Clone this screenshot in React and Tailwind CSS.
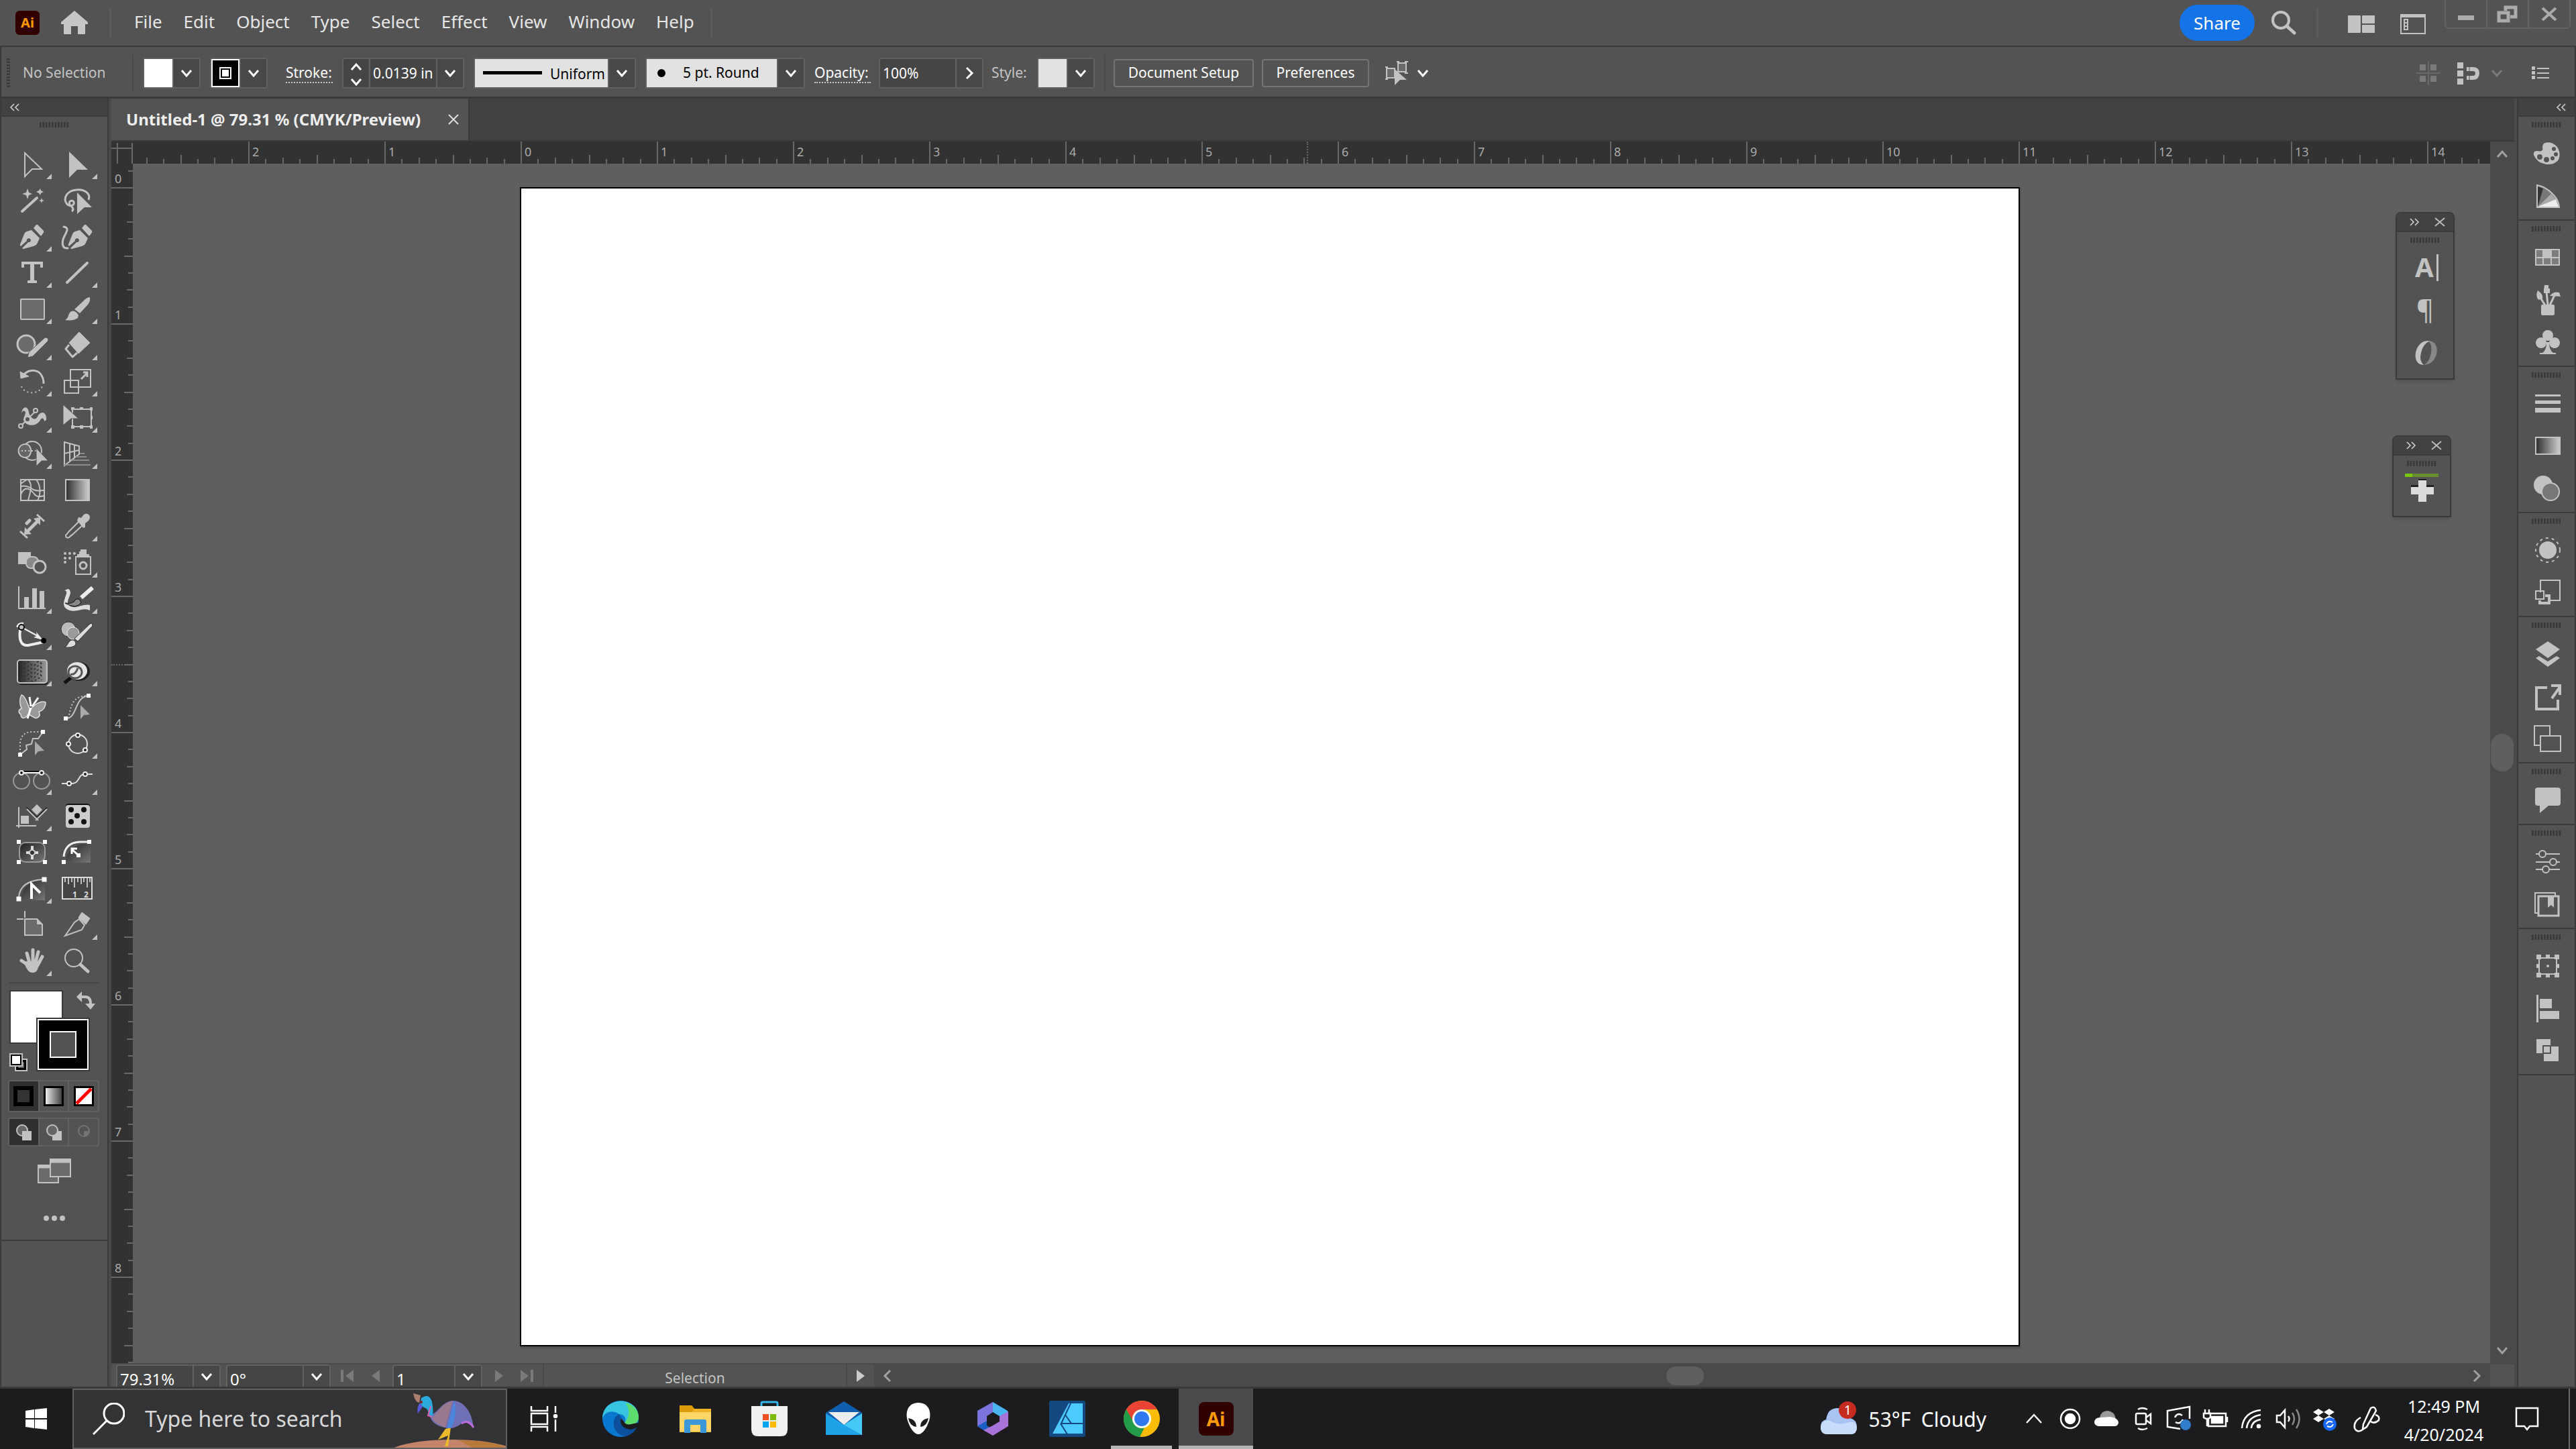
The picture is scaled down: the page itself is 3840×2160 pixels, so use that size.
import { useState } from 'react'

const menus = ['File', 'Edit', 'Object', 'Type', 'Select', 'Effect', 'View', 'Window', 'Help']

// ── small shared pieces ──

const chevrons = {
  down: 'M-7 -4 L0 4 L7 -4',
  up: 'M-7 4 L0 -4 L7 4',
  left: 'M4 -8 L-4 0 L4 8',
  right: 'M-4 -8 L4 0 L-4 8',
}

function Chevron({ dir = 'down', width = 3 }) {
  return (
    <svg className="w-6 h-6 shrink-0 pointer-events-none" viewBox="-12 -12 24 24" aria-hidden="true">
      <path d={chevrons[dir]} fill="none" stroke="currentColor" strokeWidth={width} />
    </svg>
  )
}

function DoubleChevron({ dir = 'left' }) {
  return (
    <svg className="w-4 h-3" viewBox="0 0 16 12" fill="none" stroke="#d0d0d0" strokeWidth="1.6" aria-hidden="true">
      <path d={dir === 'left' ? 'M7 1 L2 6 L7 11 M14 1 L9 6 L14 11' : 'M2 1 L7 6 L2 11 M9 1 L14 6 L9 11'} />
    </svg>
  )
}

function Grip() {
  return (
    <svg className="w-11 h-2 mx-auto" viewBox="0 0 44 8" aria-hidden="true">
      <path d="M0 4 H44" stroke="#393939" strokeWidth="8" strokeDasharray="2.6 1.9" />
    </svg>
  )
}

function AiLogo({ className }) {
  return (
    <span className={`flex items-center justify-center bg-[#300000] text-[#ff9a00] font-bold ${className}`}>Ai</span>
  )
}

function ArrowButton({ label, dir = 'down' }) {
  return (
    <button aria-label={label} className="w-10 h-full shrink-0 flex items-center justify-center bg-[#484848] border-l-2 border-[#616161] text-white">
      <Chevron dir={dir} />
    </button>
  )
}

const boxClass = 'h-[46px] shrink-0 flex items-center border-2 border-[#616161] rounded-sm bg-[#454545]'

// ── tool icons, drawn around the centre of a 68 × 54 cell ──

const C = '#c2c2c2'
const line = { fill: 'none', stroke: C, strokeWidth: 2 }
const bg = '#535353'

const Node = ({ x, y, s = 6 }) => <rect x={x - s / 2} y={y - s / 2} width={s} height={s} fill="#fff" />
const Ring = ({ x, y }) => <circle cx={x} cy={y} r="3" fill="#222" stroke="#eee" strokeWidth="2" />

const PenBody = () => (
  <g fill={C}>
    <path d="M6 -18 Q8 -19 9 -17 L17 -9 Q18 -7 16 -5 L13 -1 L2 -13 Z" />
    <path d="M-1 -10 L11 2 L7 11 Q5 13 2 14 L-13 18 Q-15 18 -15 17 L-6 8 A3 3 0 1 0 -8 6 L-17 14 Q-19 13 -18 11 L-12 -4 Q-11 -7 -8 -8 Z" />
  </g>
)

const tools = [
  ['Selection', true, <path d="M-11 -17 L14 7 H0 L-11 18 Z" {...line} />],
  ['Direct selection', true, <path d="M-13 -19 L15 8 H-1 L-13 20 Z" fill={C} />],
  ['Magic wand', false, <g fill={C}>
    <path d="M-15 16 L7 -4" stroke={C} strokeWidth="4" strokeLinecap="round" />
    <path d="M-7 -18 L-5 -12 L0 -10 L-5 -8 L-7 -2 L-9 -8 L-15 -10 L-9 -12 Z M12 -18 L13 -15 L17 -13 L13 -11 L12 -8 L10 -11 L6 -13 L10 -15 Z M14 -4 L15 -1 L18 0 L15 1 L14 4 L13 1 L10 0 L13 -1 Z" />
  </g>],
  ['Lasso', false, <g>
    <path d="M16 -1 C20 -12 8 -17 -2 -16 C-16 -15 -22 -4 -17 4 C-13 10 -4 8 -6 2 C-8 -2 -15 1 -12 6 C-10 9 -4 12 -9 16" {...line} strokeWidth="3" />
    <path d="M-1 -12 L21 10 H10 L-1 20 Z" fill={C} />
  </g>],
  ['Pen', true, <PenBody />],
  ['Curvature', false, <g>
    <g transform="translate(4 0)"><PenBody /></g>
    <path d="M-21 -15 C-10 -13 -20 -4 -22 4 C-24 12 -22 18 -15 17" {...line} strokeWidth="3" strokeLinecap="round" />
  </g>],
  ['Type', true, <g fill={C}>
    <rect x="-16" y="-17" width="32" height="4" rx="1" /><rect x="-16" y="-17" width="4" height="9" rx="1" /><rect x="12" y="-17" width="4" height="9" rx="1" />
    <rect x="-3" y="-17" width="6" height="30" /><rect x="-7" y="11" width="14" height="4" rx="1" />
  </g>],
  ['Line segment', true, <path d="M-16 14 L14 -15" stroke={C} strokeWidth="4" strokeLinecap="round" />],
  ['Rectangle', true, <rect x="-17" y="-15" width="35" height="30" rx="1" {...line} fill="#6b6b6b" />],
  ['Paintbrush', true, <g fill={C}>
    <path d="M18 -18 Q19 -12 15 -7 L3 6 L-5 0 L8 -12 Q13 -18 18 -18 Z" />
    <path d="M-19 16 Q-15 14 -14 9 Q-11 1 -5 3 Q3 7 0 13 Q-7 18 -19 16 Z" />
  </g>],
  ['Shaper', true, <g>
    <circle cx="-9" cy="-2" r="13" {...line} fill="#6b6b6b" strokeWidth="3" />
    <path d="M-7 18 L-5 10 L18 -11 Q20 -13 23 -11 Q25 -9 23 -6 L1 16 Z" fill={C} stroke={bg} />
  </g>],
  ['Eraser', true, <g>
    <path d="M2 -20 L18 -4 L1 12 L-13 -4 Z" fill={C} stroke={C} strokeLinejoin="round" />
    <path d="M-13 -1 L-18 5 L-8 17 L-1 11" {...line} strokeWidth="3" strokeLinejoin="round" />
  </g>],
  ['Rotate', true, <g>
    <path d="M-13 -10 C-4 -20 10 -18 14 -9 Q17 -5 17 3" {...line} strokeWidth="3" />
    <path d="M-18 -15 L-17 -5 L-5 -8 Z" fill={C} stroke={C} />
    <path d="M-16 7 C-12 19 10 20 15 7" {...line} strokeDasharray="2 4" />
  </g>],
  ['Scale', true, <g {...line}>
    <rect x="-11" y="-18" width="30" height="26" /><rect x="-20" y="-2" width="21" height="19" />
    <path d="M5 -4 L14 -13 M8 -14 H14 V-7" strokeWidth="3" />
  </g>],
  ['Width', true, <g>
    <path d="M-16 -7 C-14 -19 -6 -18 -5 -8 C-2 2 5 4 8 -2 C12 -11 22 -10 21 3 L18 5 C17 -2 13 0 11 5 C4 14 -10 12 -13 3 C-13 -2 -8 -7 -11 -10 Q-14 -12 -16 -7 Z" fill={C} />
    <path d="M-17 12 L6 -11" stroke={C} strokeWidth="2" />
    <g {...line} fill={bg}><circle cx="-17" cy="12" r="3" /><circle cx="5" cy="-11" r="3" /><circle cx="-7" cy="2" r="4" /></g>
  </g>],
  ['Free transform', true, <g>
    <rect x="-8" y="-13" width="28" height="26" {...line} />
    <path d="M-10 11 h5 v5 h-5 Z M3 11 h5 v5 h-5 Z M18 11 h4 v5 h-4 Z M18 -16 h4 v5 h-4 Z M3 -16 h5 v4 h-5 Z M-10 -16 h5 v4 h-5 Z M19 -3 h3 v5 h-3 Z" fill={C} />
    <path d="M-22 -20 L1 1 H-10 L-22 11 Z" fill={C} stroke={bg} />
  </g>],
  ['Shape builder', true, <g>
    <circle cx="0" cy="-5" r="14" {...line} />
    <path d="M-6 -14 A10 10 0 1 0 -6 4 A12 12 0 0 0 -6 -14" {...line} fill="#666" />
    <path d="M-16 -5 H6" {...line} strokeDasharray="2 3" />
    <path d="M6 -9 L24 10 H14 L6 18 Z" fill={C} stroke={bg} />
  </g>],
  ['Perspective grid', true, <g {...line}>
    <path d="M-20 -18 L2 -12 V0 L-20 17 Z M-12 -16 V10 M-5 -14 V5 M-20 -1 L2 -6" />
    <path d="M3 -1 H10 M-3 4 H13 M-9 9 H17 M-20 16 H19" stroke="#8c8c8c" />
  </g>],
  ['Mesh', false, <g {...line}>
    <rect x="-17" y="-16" width="35" height="31" />
    <path d="M-17 -6 C-8 -8 -2 -4 2 -1 C8 2 12 0 18 0 M-17 6 C-12 -6 -4 -4 2 4 C6 10 10 10 18 8 M-6 -16 C2 -8 -4 6 -6 15 M6 -16 C14 -6 12 8 8 15 M-17 -10 L-8 -16" />
  </g>],
  ['Gradient', false, <rect x="-18" y="-16" width="35" height="31" {...line} fill="url(#gradDark)" />],
  ['Measure', false, <g>
    <path d="M-18 7 L-7 17 M7 -18 L18 -8" {...line} strokeWidth="3" />
    <path d="M-8 8 L8 -8" {...line} strokeWidth="5" />
    <path d="M-12 12 L-11 1 L-1 11 Z M12 -14 L12 -2 L2 -12 Z" fill={C} />
    <path d="M-8 -5 L-4 -9" {...line} strokeWidth="5" strokeLinecap="round" />
  </g>],
  ['Eyedropper', true, <g>
    <path d="M2 -8 L-14 8 Q-16 11 -18 13 Q-18 18 -13 16 Q-10 13 -8 12 L8 -3" {...line} />
    <path d="M1 -14 L5 -13 L9 -18 Q14 -21 17 -17 Q20 -13 15 -8 L11 -5 L11 1 L8 2 L-1 -9 Z" fill={C} />
  </g>],
  ['Blend', false, <g>
    <rect x="-21" y="-16" width="19" height="18" fill={C} />
    <rect x="-9" y="-9" width="18" height="17" rx="7" fill="#888" stroke={C} strokeWidth="2" />
    <circle cx="11" cy="6" r="9" {...line} fill={bg} strokeWidth="3" />
  </g>],
  ['Symbol sprayer', true, <g>
    <path d="M-19 -14 H-4 M-19 -7 H-10 M-19 -1 H-18" stroke={C} strokeWidth="4" strokeLinecap="round" strokeDasharray="0.1 6.8" />
    <rect x="-3" y="-9" width="22" height="26" {...line} /><path d="M2 -15 H13 M-1 -11 H17 M4 -18 H13" stroke={C} strokeWidth="4" />
    <circle cx="8" cy="4" r="5" {...line} strokeWidth="3" />
  </g>],
  ['Column graph', true, <g fill={C}>
    <path d="M-20 -19 V14 H20" {...line} />
    <rect x="-12" y="-3" width="7" height="16" /><rect x="0" y="-16" width="7" height="29" /><rect x="11" y="-12" width="7" height="25" />
  </g>],
  ['Art brush', true, <g>
    <path d="M-20 -12 Q-12 -19 -11 -9 C-12 -2 -17 2 -14 8 C-6 18 6 6 18 9 V17 C8 12 0 20 -12 17 C-26 12 -20 2 -17 -8 Q-16 -13 -20 -12 Z" fill="#ddd" />
    <path d="M-19 6 Q-6 8 -3 0 L2 0 L5 5 Q-2 16 -19 6 Z" fill="#888" stroke="#111" />
    <path d="M5 -2 L22 -17" stroke="#eee" strokeWidth="6" />
  </g>],
  ['Vector path', true, <g>
    <path d="M-22 -12 Q-20 -18 -13 -17 M-18 -8 C-20 8 -16 16 -6 15 L17 10" {...line} stroke="#eee" strokeWidth="4" />
    <path d="M-12 -10 L8 1" stroke="#eee" strokeWidth="2" /><path d="M6 -5 L16 7 L2 3 L7 1 Z" fill="#eee" />
    <circle cx="-16" cy="-12" r="4" fill={C} stroke="#111" strokeWidth="2" /><circle cx="17" cy="8" r="4" fill="#000" />
  </g>],
  ['Color brush', false, <g>
    <circle cx="-14" cy="-9" r="11" fill="#bbb" stroke="#333" /><circle cx="-7" cy="-3" r="9" fill="#9a9a9a" stroke="#eee" />
    <path d="M21 -18 L22 -14 L0 9 L-5 5 L18 -17 Z M-19 18 Q-15 14 -14 11 Q-10 5 -5 8 Q-1 12 -5 16 Q-10 19 -19 18 Z" fill="#ddd" stroke="#333" />
  </g>],
  ['Texture', true, <g>
    <rect x="-20" y="-15" width="43" height="35" rx="4" fill="#222" />
    <rect x="-22" y="-17" width="44" height="34" rx="4" fill="url(#gradTexture)" stroke={C} strokeWidth="2" />
    <path d="M-18 -12 q4 4 8 0 t8 1 t8 -1 t8 1 M-18 -6 q4 4 8 0 t8 1 t8 -1 t8 1 M-18 0 q4 4 8 0 t8 1 t8 -1 t8 1 M-18 6 q4 4 8 0 t8 1 t8 -1 t8 1 M-18 12 q4 3 8 0 t8 1 t8 -1 t8 1" fill="none" stroke="#333" strokeDasharray="3 3" strokeWidth="2" />
  </g>],
  ['Phantom lens', true, <g>
    <ellipse cx="2" cy="0" rx="16" ry="14" fill="#222" /><path d="M-20 17 L-10 9" stroke="#111" strokeWidth="5" />
    <ellipse cx="-1" cy="-1" rx="15" ry="13" fill="#e5e5e5" />
    <ellipse cx="-4" cy="1" rx="10" ry="9" fill="none" stroke="#555" strokeWidth="3" /><path d="M-11 4 Q-4 6 0 -5" fill="none" stroke="#555" strokeWidth="3" />
  </g>],
  ['Butterfly', false, <g stroke="#ddd" strokeWidth="1.5" fill="#999">
    <path d="M-4 2 C-8 -10 -12 -19 -16 -19 C-20 -12 -18 -4 -16 1 C-22 4 -20 8 -17 10 C-17 17 -10 18 -5 8 Z" />
    <path d="M-2 2 C4 -6 14 -11 20 -8 C20 0 15 5 10 6 C14 13 6 18 2 14 L-5 10 Z" />
    <path d="M-7 16 L-2 0 M-2 -2 L-4 -16 M0 -2 L9 -15" stroke="#fff" strokeWidth="3" />
  </g>],
  ['Dynamic sketch', false, <g>
    <path d="M-18 16 C0 16 -6 -16 16 -18" {...line} /><path d="M-14 16 C-10 -4 -8 -17 14 -18" {...line} strokeDasharray="2 3" />
    <path d="M4 -4 L18 10 L9 11 L4 17 Z" fill="#aaa" /><Node x={-18} y={16} /><Node x={16} y={-18} />
  </g>],
  ['Dynamic corner', false, <g>
    <path d="M-18 14 V-2 Q-16 -18 0 -18 H14" {...line} strokeDasharray="2 3" />
    <path d="M-18 16 L-8 8 L-9 2 L-1 0 L1 -8 L9 -8 L16 -18" {...line} />
    <path d="M4 -4 L18 10 L9 11 L4 17 Z" fill="#aaa" /><Node x={-18} y={16} /><Node x={16} y={-18} />
  </g>],
  ['Path circle', true, <g>
    <circle cx="0" cy="0" r="14" fill="none" stroke="#ddd" strokeWidth="2" /><Ring x={0} y={-13} /><Ring x={-14} y={0} /><Ring x={11} y={9} />
  </g>],
  ['Path tangent', true, <g>
    <circle cx="-16" cy="1" r="12" {...line} stroke="#9a9a9a" /><circle cx="14" cy="1" r="12" {...line} stroke="#9a9a9a" />
    <path d="M-16 -13 H14" stroke="#111" strokeWidth="2" /><path d="M-16 -11 H14" stroke="#fff" strokeWidth="2" /><Ring x={-16} y={-11} /><Ring x={14} y={-11} />
  </g>],
  ['Path extend', true, <g>
    <path d="M-24 5 H-13 C5 7 -2 -9 11 -9 H22" {...line} stroke="#ddd" /><Ring x={-13} y={5} /><Ring x={11} y={-9} />
  </g>],
  ['Axis constrain', true, <g>
    <path d="M-20 -14 V17 M-24 14 H6" {...line} /><path d="M-8 -13 L7 2 L22 -13" fill="none" stroke="#222" strokeWidth="2" /><path d="M-8 -11 L9 6 M22 -11 L5 6" {...line} />
    <rect x="-17" y="-1" width="12" height="12" fill={C} /><path d="M7 -18 L15 -10 L7 -2 L-1 -10 Z" fill={C} />
  </g>],
  ['Randomizer', false, <g>
    <rect x="-18" y="-19" width="36" height="34" rx="4" fill="#111" /><rect x="-18" y="-17" width="36" height="34" rx="4" fill="#ccc" />
    <g fill="#111"><circle cx="-10" cy="-10" r="4" /><circle cx="9" cy="-10" r="4" /><circle cx="-1" cy="-1" r="4" /><circle cx="-10" cy="8" r="4" /><circle cx="9" cy="8" r="4" /></g>
  </g>],
  ['Envelope move', false, <g>
    <rect x="-19" y="-15" width="38" height="29" rx="9" fill="url(#gradDim)" stroke="#9a9a9a" strokeWidth="2" />
    <path d="M0 -10 V10 M-9 0 H9" stroke="#ddd" strokeWidth="4" /><circle cx="0" cy="0" r="4" fill="#333" stroke="#ccc" strokeWidth="2" />
    <Node x={-20} y={-16} /><Node x={19} y={-16} /><Node x={-20} y={14} /><Node x={19} y={14} />
  </g>],
  ['Corner curve', false, <g>
    <path d="M-19 12 Q-12 -14 19 -14 V15 H-8 Z" fill="url(#gradDim)" />
    <path d="M-21 6 Q-19 -15 3 -16 H16" fill="none" stroke="#eee" strokeWidth="3" />
    <path d="M-8 -4 L1 4 M-9 2 V-6 H-1" stroke="#fff" strokeWidth="3" fill="none" /><Node x={1} y={4} /><Node x={17} y={-16} /><Node x={-21} y={14} />
  </g>],
  ['Arc edit', true, <g>
    <path d="M-18 15 Q-12 -13 19 -13 V17 H-8 Z" fill="url(#gradDim)" /><path d="M-20 12 Q-18 -12 16 -14" {...line} />
    <path d="M-1 15 V-7 L12 6" stroke="#fff" strokeWidth="4" fill="none" /><Node x={-20} y={15} s={7} /><Node x={18} y={-14} s={7} />
  </g>],
  ['Ruler', false, <g>
    <rect x="-23" y="-17" width="44" height="32" fill="#444" stroke="#ddd" strokeWidth="2" />
    <path d="M-19 -16 v6 M-14 -16 v9 M-9 -16 v6 M-5 -16 v14 M0 -16 v6 M5 -16 v9 M9 -16 v6 M14 -16 v14 M18 -16 v6" stroke="#ddd" strokeWidth="1.6" />
    <text x="-8" y="13" fontSize="12" fontWeight="bold" fill="#ddd">1</text><text x="9" y="13" fontSize="12" fontWeight="bold" fill="#ddd">2</text>
  </g>],
  ['Artboard', false, <g>
    <path d="M-11 -9 H7 L15 -1 V15 H-11 Z" {...line} fill="#6b6b6b" /><path d="M7 -9 L15 -1 H7 Z" fill={C} />
    <path d="M-23 -9 H-13 M-11 -21 V-11" {...line} />
  </g>],
  ['Slice', true, <g>
    <path d="M-19 16 L-5 -4 L2 -9 L10 0 L6 7 Z" {...line} /><path d="M6 -19 L18 -10 L12 -1 L1 -11 Z" fill={C} stroke={C} />
  </g>],
  ['Hand', true, <g>
    <path d="M-16 -1 L-7 5 M-8 -12 L-4 2 M1 -17 V2 M9 -14 L5 2 M15 -7 L8 6" stroke={C} strokeWidth="5" strokeLinecap="round" />
    <path d="M-9 0 H10 L9 9 Q7 17 1 17 Q-5 17 -8 11 L-13 2 Z" fill={C} />
  </g>],
  ['Zoom', false, <g><circle cx="-6" cy="-5" r="13" {...line} /><path d="M4 5 L15 15" stroke={C} strokeWidth="5" strokeLinecap="round" /></g>],
]

// ── dock icons, drawn around the centre of an 84 × 63 cell ──

const dock = [
  [
    ['Color', <g><path d="M-2 -16 Q8 -19 16 -10 Q22 0 18 9 Q12 17 0 16 Q-14 14 -19 2 Q-20 -4 -14 -4 Q-4 -2 -6 -9 Q-6 -15 -2 -16 Z" fill={C} /><g fill={bg}><circle cx="-10" cy="5" r="4" /><circle cx="0" cy="9" r="4" /><circle cx="9" cy="7" r="3" /><circle cx="14" cy="1" r="3" /><circle cx="11" cy="-7" r="3" /></g></g>],
    ['Color guide', <g><path d="M-14 17 V-16 Q-2 -14 8 -4 Q18 5 19 17 Z" fill="#777" stroke={C} strokeWidth="2" /><path d="M-13 16 V-14 L-5 -11 Z" fill="#333" /><path d="M-13 16 L7 -3 L14 5 Z" fill="#aaa" /><path d="M-13 16 L14 5 L18 16 Z" fill="#eee" /></g>],
  ],
  [
    ['Swatches', <g><rect x="-16" y="-12" width="35" height="23" fill="#7d7d7d" stroke={C} strokeWidth="2" /><rect x="-4" y="-11" width="11" height="11" fill={C} /><path d="M-16 0 H19 M-5 -12 V11 M7 -12 V11" {...line} /></g>],
    ['Brushes', <g fill={C}><rect x="-8" y="7" width="20" height="16" rx="2" /><path d="M-13 -14 Q-5 -9 -6 -2 L-12 0 Q-17 -6 -13 -14 Z M-3 -22 H3 V-17 H5 V-10 H-4 V-15 Z M5 -6 Q11 -13 19 -11 L21 -5 Z" /><path d="M-9 -3 L-2 8 M0 -12 L2 8 M12 -7 L5 8" {...line} strokeWidth="3" /></g>],
    ['Symbols', <g fill={C}><circle cx="2" cy="-10" r="8" /><circle cx="-8" cy="1" r="8" /><circle cx="12" cy="1" r="8" /><path d="M0 0 H4 Q4 12 10 16 H-6 Q0 12 0 0 Z" /><rect x="-10" y="16" width="24" height="2" /></g>],
  ],
  [
    ['Stroke', <g fill={C}><rect x="-17" y="-14" width="38" height="3" /><rect x="-17" y="-5" width="38" height="5" /><rect x="-17" y="6" width="38" height="7" /></g>],
    ['Gradient', <rect x="-16" y="-13" width="36" height="25" fill="url(#gradDark)" stroke={C} strokeWidth="2" />],
    ['Transparency', <g><circle cx="-5" cy="-5" r="14" fill={C} /><circle cx="6" cy="5" r="13" fill="#777" stroke={C} strokeWidth="2" /></g>],
  ],
  [
    ['Appearance', <g><circle cx="2" cy="0" r="13" fill={C} /><circle cx="2" cy="0" r="18" {...line} strokeDasharray="4 5" /></g>],
    ['Graphic styles', <g {...line}><path d="M-9 0 V-18 H20 V12 H4" /><rect x="-16" y="-2" width="12" height="12" /><path d="M-2 5 H4 V16 H-10 V12" strokeWidth="4" /></g>],
  ],
  [
    ['Layers', <g fill={C}><path d="M2 -19 L20 -7 L2 6 L-16 -7 Z" /><path d="M-16 6 L-11 3 L2 11 L15 3 L20 6 L2 19 Z" /></g>],
    ['Asset export', <path d="M1 -14 H-15 V18 H17 V4 M8 2 L20 -15 M7 -17 H20 V-3" {...line} strokeWidth="4" transform="translate(0 1)" />],
    ['Artboards', <g {...line}><path d="M-10 10 H-18 V-19 H5 V-5" /><rect x="-9" y="-4" width="30" height="23" /></g>],
  ],
  [
    ['Comments', <path d="M-13 -19 H17 Q21 -19 21 -15 V4 Q21 8 17 8 H3 L-10 19 V8 H-13 Q-17 8 -17 4 V-15 Q-17 -19 -13 -19 Z" fill={C} />],
  ],
  [
    ['Properties', <g {...line}><path d="M-16 -12 H20 M-16 0 H20 M-16 11 H20" /><g fill={bg}><circle cx="-6" cy="-12" r="5" /><circle cx="10" cy="0" r="5" /><circle cx="-1" cy="11" r="5" /></g></g>],
    ['Libraries', <g><path d="M-13 13 H-17 V-17 H13 V-13" {...line} /><rect x="-12" y="-12" width="30" height="29" {...line} strokeWidth="3" /><path d="M2 -12 H11 V5 L7 1 L2 5 Z" fill={C} /></g>],
  ],
  [
    ['Transform', <g><rect x="-11" y="-12" width="26" height="24" {...line} /><path d="M-15 -17 h7 v7 h-7 Z M-1 -17 h6 v6 h-6 Z M12 -17 h7 v7 h-7 Z M-15 -3 h5 v6 h-5 Z M14 -3 h5 v6 h-5 Z M-15 10 h7 v7 h-7 Z M-1 11 h6 v6 h-6 Z M12 10 h7 v7 h-7 Z" fill={C} /><circle cx="2" cy="0" r="2" fill={C} /></g>],
    ['Align', <g fill={C}><rect x="-15" y="-20" width="3" height="41" /><rect x="-10" y="-14" width="18" height="14" /><rect x="-10" y="4" width="29" height="12" /></g>],
    ['Pathfinder', <g fill={C}><rect x="-15" y="-17" width="21" height="21" /><rect x="-5" y="-7" width="24" height="24" stroke={bg} strokeWidth="2" /><rect x="-5" y="-7" width="11" height="11" stroke={bg} strokeWidth="2" /></g>],
  ],
]

function Defs() {
  return (
    <svg className="absolute w-0 h-0" aria-hidden="true">
      <defs>
        <linearGradient id="gradDark"><stop offset="0" stopColor="#2e2e2e" /><stop offset="1" stopColor="#d0d0d0" /></linearGradient>
        <linearGradient id="gradTexture"><stop offset="0" stopColor="#222" /><stop offset="1" stopColor="#999" /></linearGradient>
        <linearGradient id="gradDim" x1="0" y1="0" x2="1" y2="1"><stop offset="0" stopColor="#222" /><stop offset="1" stopColor="#777" /></linearGradient>
      </defs>
    </svg>
  )
}

function TitleBar() {
  return (
    <header className="h-[70px] shrink-0 flex items-center border-b-2 border-[#3a3a3a] text-[#e6e6e6]">
      <AiLogo className="ml-[23px] w-9 h-9 rounded-md text-[20px]" />
      <button aria-label="Home" className="ml-8">
        <svg className="w-10 h-9" viewBox="0 0 40 36"><path d="M20 0 L40 17 V20 H36 V34 Q36 35 35 35 H25 V23 H15 V35 H5 Q4 35 4 34 V20 H0 V17 Z" fill="#c6c6c6" /></svg>
      </button>
      <span className="ml-8 w-[3px] h-11 bg-[#5c5c5c]" />
      <nav className="ml-[34px] flex gap-8 text-[26px] leading-8 pb-1">
        {menus.map(m => <button key={m}>{m}</button>)}
      </nav>
      <span className="ml-6 w-[3px] h-11 bg-[#5c5c5c]" />
      <button className="ml-auto w-28 h-[54px] rounded-full bg-[#1473e6] text-white text-[26px]">Share</button>
      <button aria-label="Search" className="ml-6">
        <svg className="w-10 h-9" viewBox="0 0 40 36"><circle cx="15" cy="14" r="12" fill="none" stroke={C} strokeWidth="4" /><path d="M24 23 L35 33" stroke={C} strokeWidth="5" strokeLinecap="round" /></svg>
      </button>
      <span className="ml-7 w-[3px] h-11 bg-[#5c5c5c]" />
      <button aria-label="Arrange documents" className="ml-11 pt-1">
        <svg className="w-10 h-[26px]" viewBox="0 0 40 26" fill={C}><rect width="19" height="26" rx="1" /><rect x="21" width="19" height="12" rx="1" /><rect x="21" y="14" width="19" height="12" rx="1" /></svg>
      </button>
      <button aria-label="Switch workspace" className="ml-[38px] pt-1">
        <svg className="w-[38px] h-[30px]" viewBox="0 0 38 30" {...line}><rect x="1" y="1" width="36" height="28" /><path d="M0 3 H38" strokeWidth="4" /><rect x="6" y="8" width="5" height="15" /><path d="M6 13 H11 M6 18 H11" /></svg>
      </button>
      <div className="ml-7 mr-2 self-start w-[188px] h-[43px] flex border-2 border-t-0 border-[#626262] rounded-b-md divide-x-2 divide-[#626262]">
        <button aria-label="Minimize" className="flex-1 flex justify-center items-center pt-3"><span className="w-6 h-[7px] bg-[#ababab]" /></button>
        <button aria-label="Restore" className="flex-1 flex justify-center items-center">
          <svg className="w-8 h-7" viewBox="0 0 32 28" fill="none" stroke="#ababab" strokeWidth="5"><path d="M13 9 V4 H28 V18 H20" /><rect x="3" y="12" width="14" height="12" /></svg>
        </button>
        <button aria-label="Close" className="flex-1 flex justify-center items-center">
          <svg className="w-6 h-5" viewBox="0 0 24 20"><path d="M2 1 L22 19 M22 1 L2 19" stroke="#ababab" strokeWidth="4" /></svg>
        </button>
      </div>
    </header>
  )
}

function OptionsBar() {
  const [weight, setWeight] = useState('0.0139 in')
  const [opacity, setOpacity] = useState('100%')
  return (
    <section className="h-[77px] shrink-0 flex items-center pt-[3px] border-b-[3px] border-x-2 border-[#3a3a3a] text-[21px] text-white whitespace-nowrap">
      <svg className="ml-2 w-[5px] h-11" viewBox="0 0 5 44"><path d="M2.5 0 V44" stroke="#393939" strokeWidth="5" strokeDasharray="2.6 1.9" /></svg>
      <span className="ml-[19px] w-[163px] text-[#c4c4c4]">No Selection</span>
      <span className="w-[2px] h-14 bg-[#4a4a4a]" />
      <div className={`${boxClass} ml-[14px] w-[86px]`}>
        <button aria-label="Fill" className="flex-1 h-full bg-white" />
        <ArrowButton label="Fill options" />
      </div>
      <div className={`${boxClass} ml-[14px] w-[86px]`}>
        <button aria-label="Stroke color" className="flex-1 h-full bg-black border-2 border-white flex items-center justify-center">
          <span className="w-[18px] h-[18px] border-2 border-white flex items-center justify-center"><span className="w-[10px] h-[10px] bg-white" /></span>
        </button>
        <ArrowButton label="Stroke color options" />
      </div>
      <label htmlFor="weight" className="ml-[27px] w-[70px] leading-7 border-b-2 border-dotted border-[#ccc]">Stroke:</label>
      <div className={`${boxClass} ml-[14px] w-[182px]`}>
        <div className="w-[38px] h-full flex flex-col items-center justify-between">
          <button aria-label="Increase" className="h-5"><Chevron dir="up" /></button>
          <button aria-label="Decrease" className="h-5"><Chevron /></button>
        </div>
        <input id="weight" value={weight} onChange={e => setWeight(e.target.value)} className="flex-1 min-w-0 h-full border-l-2 border-[#616161] pl-1 bg-transparent outline-none" />
        <ArrowButton label="Stroke weights" />
      </div>
      <div className={`${boxClass} ml-[14px] w-[242px]`}>
        <div className="flex-1 h-full flex items-center bg-[#e2e2e2] text-black">
          <span className="ml-3 w-[88px] h-[5px] bg-black" />
          <select aria-label="Width profile" className="ml-3 pt-1 flex-1 h-full appearance-none bg-transparent outline-none"><option>Uniform</option></select>
        </div>
        <ArrowButton label="Width profiles" />
      </div>
      <div className={`${boxClass} ml-[14px] w-[238px]`}>
        <div className="flex-1 h-full flex items-center bg-[#e2e2e2] text-black">
          <span className="ml-4 w-3 h-3 rounded-full bg-black" />
          <select aria-label="Brush" className="ml-[26px] flex-1 h-full appearance-none bg-transparent outline-none"><option>5 pt. Round</option></select>
        </div>
        <ArrowButton label="Brushes" />
      </div>
      <label htmlFor="opacity" className="ml-[14px] w-[84px] leading-7 border-b-2 border-dotted border-[#ccc]">Opacity:</label>
      <div className={`${boxClass} ml-3 w-[156px]`}>
        <input id="opacity" value={opacity} onChange={e => setOpacity(e.target.value)} className="flex-1 min-w-0 h-full pl-1 bg-transparent outline-none" />
        <ArrowButton label="Opacity slider" dir="right" />
      </div>
      <span className="ml-3 w-14 text-[#c4c4c4]">Style:</span>
      <div className={`${boxClass} ml-3 w-[86px]`}>
        <button aria-label="Graphic style" className="flex-1 h-full bg-[#e2e2e2]" />
        <ArrowButton label="Graphic styles" />
      </div>
      <span className="ml-[14px] w-[2px] h-14 bg-[#4a4a4a]" />
      <button className="ml-3 w-[209px] h-[42px] border-2 border-[#757575] rounded">Document Setup</button>
      <button className="ml-3 w-[160px] h-[42px] border-2 border-[#757575] rounded">Preferences</button>
      <button aria-label="Select similar" className="ml-[22px] flex items-center gap-[6px]">
        <svg className="w-10 h-9" viewBox="0 0 40 36"><g {...line} fill="#6b6b6b"><rect x="4" y="11" width="12" height="14" /><rect x="21" y="3" width="12" height="13" /></g><path d="M2 9 h4 M2 27 h4 M19 1 h4 M31 1 h5 M31 18 h5" {...line} /><path d="M16 12 L34 28 H24 L16 36 Z" fill={C} /></svg>
        <Chevron />
      </button>
      <div className="ml-auto mr-[36px] flex items-center">
        <svg className="w-9 h-9" viewBox="0 0 36 36"><path d="M0 18 H36 M18 0 V36" stroke="#686868" strokeWidth="2" /><path d="M5 5 h9 v9 h-9 Z M21 5 h9 v9 h-9 Z M5 22 h9 v9 h-9 Z M21 22 h9 v9 h-9 Z" fill="#7a7a7a" /></svg>
        <svg className="ml-6 w-9 h-9" viewBox="0 0 36 36"><path d="M1 2 h9 v9 h-9 Z M1 14 h9 v9 h-9 Z M1 26 h9 v9 h-9 Z" fill={C} /><path d="M15 12 H24 Q31 12 31 18 Q31 25 24 25 H15" fill="none" stroke={C} strokeWidth="6" /><path d="M19 8 V29" stroke={bg} /></svg>
        <span className="ml-3 text-[#7a7a7a]"><Chevron /></span>
        <button aria-label="Panel menu" className="ml-10"><svg className="w-7 h-5" viewBox="0 0 28 20" fill={C}><path d="M0 0 h5 v5 h-5 Z M0 7 h5 v5 h-5 Z M0 14 h5 v5 h-5 Z M8 2 h18 v2 h-18 Z M8 9 h18 v2 h-18 Z M8 16 h18 v2 h-18 Z" /></svg></button>
      </div>
    </section>
  )
}

function ToolPanel() {
  return (
    <aside className="w-[162px] shrink-0 flex flex-col border-x-2 border-[#3a3a3a] bg-[#535353]">
      <div className="h-[27px] shrink-0 flex items-center pl-3 bg-[#424242] border-b-2 border-[#3a3a3a]"><DoubleChevron /></div>
      <div className="pt-2 h-[44px] shrink-0"><Grip /></div>
      <div className="grid grid-cols-[68px_68px] ml-3">
        {tools.map(([name, more, icon]) => (
          <button key={name} aria-label={name} className="h-[54px]">
            <svg className="w-[68px] h-[54px]" viewBox="-34 -27 68 54">
              {icon}
              {more && <path d="M29 14 V22 H21 Z" fill={C} />}
            </svg>
          </button>
        ))}
      </div>
      <div className="mx-3 mt-1 border-t-2 border-[#474747]" />
      {/* fill and stroke swatches overlap */}
      <div className="relative mt-[10px] ml-3 w-[136px] h-[122px]">
        <button aria-label="Fill" className="absolute left-0 top-0 w-20 h-20 bg-white border-2 border-[#3a3a3a]" />
        <button aria-label="Stroke" className="absolute left-10 top-[41px] w-20 h-20 bg-black border-2 border-[#3a3a3a]">
          <span className="w-full h-full border-2 border-white flex items-center justify-center"><span className="w-10 h-10 bg-[#535353] border-2 border-white" /></span>
        </button>
        <button aria-label="Swap fill and stroke" className="absolute right-2 top-0.5">
          <svg className="w-7 h-7" viewBox="0 0 28 28"><path d="M6 8 H13 Q21 8 21 18" fill="none" stroke={C} strokeWidth="4" /><path d="M0 8 L8 0 V16 Z M13 18 H28 L21 27 Z" fill={C} /></svg>
        </button>
        <button aria-label="Default fill and stroke" className="absolute left-0 bottom-0">
          <svg className="w-7 h-7" viewBox="0 0 28 28"><rect x="9" y="9" width="17" height="17" fill="#000" stroke={C} strokeWidth="2" /><rect x="14" y="14" width="7" height="7" fill="#000" stroke={C} /><rect x="1" y="1" width="18" height="18" fill="#000" stroke={C} strokeWidth="2" /><rect x="4" y="4" width="12" height="12" fill="#fff" /></svg>
        </button>
      </div>
      <div className="mt-3 ml-[10px] w-[136px] h-12 flex border-2 border-[#616161] rounded divide-x-2 divide-[#616161]">
        <button aria-label="Color" className="flex-1 flex items-center justify-center bg-[#303030]"><span className="w-[30px] h-[30px] bg-[#333] border-[6px] border-black" /></button>
        <button aria-label="Gradient" className="flex-1 flex items-center justify-center"><span className="w-[30px] h-[30px] border-[3px] border-black bg-linear-to-r from-[#eee] to-[#444]" /></button>
        <button aria-label="None" className="flex-1 flex items-center justify-center">
          <svg className="w-[30px] h-[30px]" viewBox="0 0 30 30"><rect x="1.5" y="1.5" width="27" height="27" fill="#fff" stroke="#000" strokeWidth="3" /><path d="M4 26 L26 4" stroke="#f00" strokeWidth="5" /></svg>
        </button>
      </div>
      <div className="mt-2 ml-[10px] w-[136px] h-[43px] flex border-2 border-[#616161] rounded divide-x-2 divide-[#616161]">
        <button aria-label="Draw normal" className="flex-1 flex items-center justify-center bg-[#303030]"><svg className="w-6 h-6" viewBox="0 0 24 24"><circle cx="10" cy="9" r="8" {...line} fill="#666" /><rect x="10" y="10" width="14" height="14" fill={C} /></svg></button>
        <button aria-label="Draw behind" className="flex-1 flex items-center justify-center"><svg className="w-6 h-6" viewBox="0 0 24 24"><rect x="10" y="10" width="14" height="14" fill={C} /><circle cx="10" cy="9" r="8" {...line} fill="#666" /></svg></button>
        <button aria-label="Draw inside" className="flex-1 flex items-center justify-center"><svg className="w-6 h-6" viewBox="0 0 24 24"><circle cx="12" cy="10" r="8" fill="none" stroke="#747474" strokeWidth="2" /><path d="M12 10 H20 Q20 18 12 18 Z" fill="#747474" /></svg></button>
      </div>
      <button aria-label="Change screen mode" className="mt-[18px] mx-auto">
        <svg className="w-[50px] h-[37px]" viewBox="0 0 50 37" {...line} fill="#6b6b6b"><rect x="1" y="10" width="30" height="26" /><path d="M0 12 H31" strokeWidth="5" /><rect x="19" y="1" width="30" height="26" /><path d="M18 4 H50" strokeWidth="5" /></svg>
      </button>
      <button aria-label="Edit toolbar" className="mt-12 mx-auto flex gap-1">
        <span className="w-2 h-2 rounded-full bg-[#c2c2c2]" /><span className="w-2 h-2 rounded-full bg-[#c2c2c2]" /><span className="w-2 h-2 rounded-full bg-[#c2c2c2]" />
      </button>
      <div className="mt-7 border-t-2 border-[#3a3a3a]" />
    </aside>
  )
}

const tickH = ['h-full', 'h-[7px]', 'h-[9px]', 'h-[7px]', 'h-[13px]', 'h-[7px]', 'h-[9px]', 'h-[7px]']
const tickW = ['w-[7px]', 'w-[9px]', 'w-[7px]', 'w-[13px]', 'w-[7px]', 'w-[9px]', 'w-[7px]', 'w-full']
const across = ['', 2, 1, 0, 1, 2, 3, 4, 5, 6, 7, 8, 9, 10, 11, 12, 13, 14]
const down = [0, 1, 2, 3, 4, 5, 6, 7, 8, '']

function TopRuler() {
  return (
    <div className="h-[33px] shrink-0 flex bg-[#323232] text-[18px] text-[#ababab]">
      <svg className="w-8 h-full shrink-0" viewBox="0 0 32 33"><path d="M0 10 H32 M9 2 V33 M31 2 V33" stroke="#686868" strokeWidth="2" /></svg>
      <div className="relative flex-1 min-w-0 overflow-hidden flex">
        {across.map((n, i) => (
          <div key={i} className="relative w-[203px] shrink-0 flex items-end first:-ml-[31px]">
            {tickH.map((h, t) => <span key={t} className={`flex-1 border-l-2 border-[#686868] ${h}`} />)}
            <span className="absolute left-[6px] top-[5px] leading-5">{n}</span>
          </div>
        ))}
        <span className="absolute left-[1750px] inset-y-0 border-l-2 border-dotted border-[#686868]" />
      </div>
    </div>
  )
}

function SideRuler() {
  return (
    <div className="relative w-8 shrink-0 overflow-hidden flex flex-col bg-[#323232] text-[18px] text-[#ababab]">
      {down.map((n, i) => (
        <div key={i} className="relative h-[203px] shrink-0 flex flex-col items-end first:-mt-[166px]">
          {tickW.map((w, t) => <span key={t} className={`flex-1 border-b-2 border-[#686868] ${w}`} />)}
          <span className="absolute left-[5px] bottom-[5px] leading-5">{n}</span>
        </div>
      ))}
      <span className="absolute top-[746px] inset-x-0 border-t-2 border-dotted border-[#686868]" />
    </div>
  )
}

function FloatingPanel({ className, children }) {
  return (
    <div className={`absolute w-[88px] border-2 border-[#3a3a3a] rounded-t-lg bg-[#535353] shadow-md ${className}`}>
      <div className="h-7 flex items-center justify-between pl-[18px] pr-3 bg-[#424242] rounded-t-lg border-b-2 border-[#3a3a3a]">
        <DoubleChevron dir="right" />
        <button aria-label="Close panel"><svg className="w-4 h-4" viewBox="0 0 16 16"><path d="M1 2 L15 14 M15 2 L1 14" stroke="#bbb" strokeWidth="2" /></svg></button>
      </div>
      <div className="pt-2"><Grip /></div>
      {children}
    </div>
  )
}

function StatusBar() {
  const [zoom, setZoom] = useState('79.31%')
  const [angle, setAngle] = useState('0°')
  const [board, setBoard] = useState('1')
  const field = 'h-full flex border-2 border-b-0 border-[#616161] rounded-t bg-[#454545]'
  const input = 'flex-1 min-w-0 pl-1 pt-2 bg-transparent outline-none'
  return (
    <footer className="h-[35px] shrink-0 flex items-end bg-[#535353] border-t-2 border-[#4a4a4a] text-[24px] leading-7 text-white">
      <div className={`${field} ml-[7px] w-[156px]`}><input aria-label="Zoom" className={input} value={zoom} onChange={e => setZoom(e.target.value)} /><ArrowButton label="Zoom levels" /></div>
      <div className={`${field} ml-2 w-[156px]`}><input aria-label="Rotate view" className={input} value={angle} onChange={e => setAngle(e.target.value)} /><ArrowButton label="Rotation angles" /></div>
      <div className="w-[92px] h-full flex items-center justify-around px-1">
        <button aria-label="First"><svg className="w-5 h-5" viewBox="0 0 20 20" fill="#7a7a7a"><path d="M0 1 h4 v18 h-4 Z M19 1 V19 L7 10 Z" /></svg></button>
        <button aria-label="Previous"><svg className="w-5 h-5" viewBox="0 0 20 20" fill="#7a7a7a"><path d="M16 1 V19 L4 10 Z" /></svg></button>
      </div>
      <div className={`${field} w-[134px]`}><input aria-label="Artboard" className={input} value={board} onChange={e => setBoard(e.target.value)} /><ArrowButton label="Artboards" /></div>
      <div className="w-[92px] h-full flex items-center justify-around px-1 border-r-2 border-[#4a4a4a]">
        <button aria-label="Next"><svg className="w-5 h-5" viewBox="0 0 20 20" fill="#7a7a7a"><path d="M4 1 V19 L16 10 Z" /></svg></button>
        <button aria-label="Last"><svg className="w-5 h-5" viewBox="0 0 20 20" fill="#7a7a7a"><path d="M16 1 h4 v18 h-4 Z M1 1 V19 L13 10 Z" /></svg></button>
      </div>
      <span className="w-[452px] h-full pt-[6px] text-center text-[21px] text-[#c4c4c4] border-r-2 border-[#4a4a4a]">Selection</span>
      <button aria-label="Status menu" className="w-10 h-full flex items-center justify-center"><svg className="w-3 h-[18px]" viewBox="0 0 12 18"><path d="M0 0 V18 L12 9 Z" fill="#ccc" /></svg></button>
      <div className="flex-1 h-full flex items-center bg-[#4a4a4a] text-[#a0a0a0] px-2">
        <Chevron dir="left" />
        <span className="ml-[48%] w-14 h-7 rounded-full bg-[#5f5f5f]" />
        <span className="ml-auto"><Chevron dir="right" /></span>
      </div>
      <span className="w-9" />
    </footer>
  )
}

function DocumentWindow() {
  return (
    <main className="flex-1 min-w-0 flex flex-col">
      <div className="h-16 shrink-0 flex bg-[#424242] border-b-2 border-[#3a3a3a]">
        <div className="flex items-center w-[534px] pl-[22px] bg-[#535353] border-r-2 border-[#3a3a3a] text-[#eee] whitespace-nowrap">
          <span className="text-[24px] font-bold">Untitled-1 @ 79.31 % (CMYK/Preview)</span>
          <button aria-label="Close document" className="ml-auto mr-[14px]"><svg className="w-4 h-4" viewBox="0 0 16 16"><path d="M1 1 L15 15 M15 1 L1 15" stroke="#ddd" strokeWidth="2" /></svg></button>
        </div>
      </div>
      <div className="flex-1 min-h-0 flex">
        <div className="flex-1 min-w-0 flex flex-col">
          <TopRuler />
          <div className="flex-1 min-h-0 flex">
            <SideRuler />
            <div className="relative flex-1 min-w-0 overflow-hidden bg-[#5f5f5f]">
              <div className="ml-[577px] mt-[35px] w-[2236px] h-[1728px] bg-white border-2 border-black shadow-[1px_3px_2px_#505050]" />
              <FloatingPanel className="right-[53px] top-[72px] h-[250px]">
                <svg className="mx-auto w-20 h-[194px]" viewBox="0 0 80 194" fill={C}>
                  <text x="25" y="51" fontSize="40" fontWeight="bold">A</text>
                  <rect x="57" y="17" width="3" height="40" />
                  <text x="27" y="114" fontSize="40">¶</text>
                  <path d="M44 146 C24 146 18 182 38 182 Q31 176 34 164 Q37 150 48 146 Z" />
                  <path d="M44 146 C66 146 60 182 38 182 Q46 179 49 164 Q51 150 44 146 Z" fill="#888" />
                </svg>
              </FloatingPanel>
              <FloatingPanel className="right-[58px] top-[405px] h-[122px]">
                <svg className="mx-auto mt-[9px] w-[50px] h-12" viewBox="0 0 50 48">
                  <rect y="2" width="50" height="5" fill="#678f2e" /><rect y="2" width="11" height="5" fill="#7ac70c" />
                  <path d="M20 10 h12 v6 h-12 Z M9 19 h34 v4 h-34 Z" fill="#222" /><path d="M20 12 H32 V22 H43 V33 H32 V44 H20 V33 H9 V22 H20 Z" fill="#dcdcdc" />
                </svg>
              </FloatingPanel>
            </div>
          </div>
        </div>
        <div className="w-9 shrink-0 flex flex-col items-center bg-[#4a4a4a] py-[7px] text-[#a0a0a0]">
          <Chevron dir="up" />
          <span className="mt-[852px] w-[34px] h-14 rounded-full bg-[#5f5f5f]" />
          <span className="mt-auto"><Chevron /></span>
        </div>
      </div>
      <StatusBar />
    </main>
  )
}

function Dock() {
  return (
    <aside className="w-[88px] shrink-0 border-x-2 border-[#3a3a3a] bg-[#535353]">
      <div className="h-[27px] flex items-center justify-end pr-3 bg-[#424242] border-b-2 border-[#3a3a3a]"><DoubleChevron /></div>
      {dock.map((group, i) => (
        <div key={i} className="pt-2 pb-1 border-b-2 border-[#3a3a3a]">
          <div className="h-[15px]"><Grip /></div>
          {group.map(([name, icon]) => (
            <button key={name} aria-label={name} className="block h-[63px]">
              <svg className="w-[84px] h-[63px]" viewBox="-42 -32 84 63">{icon}</svg>
            </button>
          ))}
        </div>
      ))}
    </aside>
  )
}

const apps = [
  ['Task view', <g fill="none" stroke="#fff" strokeWidth="2.5"><path d="M6 8 V15 H30 V8 M6 46 V39 H30 V46 M42 8 V18 M42 28 V46" /><rect x="6" y="19" width="24" height="16" /><circle cx="42" cy="23" r="2" fill="#fff" /></g>],
  ['Edge', <g><circle cx="28" cy="27" r="27" fill="#0b78d0" /><path d="M1 27 C1 -8 55 -8 55 25 C55 37 38 40 34 33 C38 26 33 20 26 20 C15 12 3 18 1 27 Z" fill="#36c4e0" /><path d="M35 3 C48 6 55 15 55 25 C55 37 38 40 34 33 C40 28 44 14 35 3 Z" fill="#5cdc6c" /><path d="M26 20 C12 26 16 52 36 53 C44 51 50 45 52 40 C40 48 24 38 29 25 Z" fill="#0c4f9c" /><path d="M29 26 C24 38 40 48 52 40 L58 32 L48 34 Q36 38 33 31 Z" fill="#1c1c1f" /></g>],
  ['File Explorer', <g><path d="M5 7 H23 L27 12 H52 V47 H5 Z" fill="#f0b429" /><path d="M5 7 H23 L27 12 L23 17 H5 Z" fill="#dd9a09" /><rect x="5" y="17" width="47" height="29" fill="#ffd567" /><path d="M12 48 V31 Q12 28 15 28 H42 Q45 28 45 31 V48 H36 V36 H21 V48 Z" fill="#3b97d8" /></g>],
  ['Microsoft Store', <g><path d="M16 14 V4 Q16 2 18 2 H38 Q40 2 40 4 V14" fill="none" stroke="#35b6ee" strokeWidth="3" /><path d="M1 8 H55 V43 Q55 53 45 53 H11 Q1 53 1 43 Z" fill="#f0f0f0" /><path d="M18 20 h9 v9 h-9 Z" fill="#f25022" /><path d="M29 20 h9 v9 h-9 Z" fill="#7fba00" /><path d="M18 31 h9 v9 h-9 Z" fill="#00a4ef" /><path d="M29 31 h9 v9 h-9 Z" fill="#ffb900" /></g>],
  ['Mail', <g><path d="M1 18 L28 1 L55 18 V51 H1 Z" fill="#0f5fae" /><path d="M5 17 H51 L28 36 Z" fill="#eee" /><path d="M1 19 L28 36 L55 19 V51 H1 Z" fill="#1fa2e8" /><path d="M28 36 L55 19 V51 Z" fill="#45c8f5" /></g>],
  ['Alienware', <g><path d="M28 3 C44 3 48 18 44 30 C40 42 34 50 28 50 C22 50 16 42 12 30 C8 18 12 3 28 3 Z" fill="#fff" /><path d="M13 26 Q25 28 25 39 Q15 38 13 26 Z M43 26 Q31 28 31 39 Q41 38 43 26 Z" fill="#1c1c1f" /></g>],
  ['Microsoft 365', <g><path d="M28 2 L50 15 V30 L38 23 L28 17 Z" fill="#49b5ee" /><path d="M28 2 L28 17 L19 23 V37 L28 43 L18 46 L5 38 V15 Z" fill="#7b74dc" /><path d="M5 38 L19 30 V37 L28 43 L18 46 Z" fill="#1a5fc4" /><path d="M51 16 V38 L28 52 L14 44 L28 37 L38 31 V23 Z" fill="#a773d8" /></g>],
  ['Affinity Designer', <g><rect x="1" width="54" height="54" rx="3" fill="#134881" /><path d="M30 4 H51 V49 H6 Z" fill="#4cc9ff" /><path d="M33 4 L18 36 M25 21 L34 34 H51 M18 34 L28 50 M18 34 H34" stroke="#134881" strokeWidth="2" fill="none" /></g>],
  ['Chrome', <g><circle cx="28" cy="27" r="27" fill="#fbbc05" /><path d="M5 13 A27 27 0 0 1 51 13 H28 A14 14 0 0 0 16 34 Z" fill="#ea4335" /><path d="M5 13 L17 34 Q22 41 32 40 L25 54 A27 27 0 0 1 5 13 Z" fill="#229c48" /><circle cx="28" cy="27" r="14" fill="#fff" /><circle cx="28" cy="27" r="11" fill="#3078ef" /></g>],
]

const tray = [
  ['Show hidden icons', <path d="M-11 6 L0 -6 L11 6" />],
  ['Recorder', <g><circle r="14" /><circle r="7" fill="#fff" /></g>],
  ['OneDrive', <g stroke="none"><path d="M-10 -2 Q-8 -12 2 -12 Q12 -11 14 0 L0 4 Z" fill="#999" /><path d="M-18 6 Q-18 -2 -9 -2 L6 -3 Q18 -1 18 6 Q17 11 12 11 H-12 Q-17 10 -18 6 Z" fill="#fff" /></g>],
  ['Meet now', <g><rect x="-10" y="-8" width="15" height="16" rx="2" /><path d="M5 -2 L12 -7 V7 L5 2 M-7 -14 Q-1 -18 7 -14 M-7 14 Q-1 18 7 14" /></g>],
  ['Update', <g><path d="M16 0 V-18 L-17 -12 V12 L2 15" /><path d="M-6 -2 Q-2 -10 5 -5 M6 1 Q2 9 -5 5" /><circle cx="10" cy="9" r="8" fill="#2f7cc9" stroke="none" /></g>],
  ['Battery', <g><rect x="-10" y="-8" width="26" height="19" /><rect x="-5" y="-3" width="16" height="9" fill="#fff" /><path d="M18 -3 V5 M-15 -14 V-9 M-9 -14 V-9 M-12 1 V11" /><path d="M-17 -8 H-7 V-2 Q-12 2 -17 -2 Z" fill="#1c1c1f" /></g>],
  ['Wi-Fi', <g><path d="M-14 14 Q-12 -10 14 -13 M-7 14 Q-5 -3 14 -6 M0 14 Q1 3 14 1" /><circle cx="11" cy="11" r="2" fill="#fff" /></g>],
  ['Volume', <g><path d="M-16 -5 H-11 L-4 -13 V13 L-11 5 H-16 Z M1 -4 Q4 0 1 4" /><path d="M7 -9 Q13 0 7 9 M13 -14 Q22 0 13 14" stroke="#888" /></g>],
  ['Dropbox', <g stroke="none"><path d="M-8 -15 L0 -10 L-8 -5 L-16 -10 Z M8 -15 L16 -10 L8 -5 L0 -10 Z M-8 -5 L0 0 L-8 5 L-16 0 Z M8 -5 L16 0 L8 5 L0 0 Z" fill="#fff" /><circle cx="9" cy="8" r="10" fill="#1769ff" /><path d="M4 8 Q6 2 13 5 M14 8 Q12 14 5 11" stroke="#fff" strokeWidth="2" fill="none" /></g>],
]

function Cassowary() {
  return (
    <svg className="ml-auto w-[180px] h-full" viewBox="0 0 180 86" aria-hidden="true">
      <ellipse cx="100" cy="98" rx="100" ry="24" fill="#c48469" /><path d="M110 75 Q165 76 180 86 H130 Z" fill="#b9793a" />
      <path d="M98 56 L94 84 H89 L94 68 L79 74 L90 58 Z" fill="#edb92c" />
      <path d="M66 36 C76 40 84 16 101 16 C118 16 130 34 132 56 Q122 45 114 50 Q104 58 94 57 C78 55 68 48 66 36 Z" fill="#6e6fb5" />
      <path d="M80 30 Q90 18 101 16 L90 56 Q74 50 70 42 Z" fill="#97788f" /><path d="M103 16 Q109 34 99 56 L92 57 Z" fill="#4b86dc" />
      <path d="M114 50 Q124 43 132 56" fill="none" stroke="#c06ae0" strokeWidth="3" />
      <path d="M54 12 Q66 4 70 18 Q73 34 70 40 L64 38 Q66 28 58 26 Q51 22 54 12 Z" fill="#29a9dc" />
      <path d="M68 24 L64 38 L70 40" fill="none" stroke="#e25ba8" strokeWidth="2" />
      <path d="M42 5 L53 8 L51 19 Q44 18 42 5 Z" fill="#ad7d6d" /><path d="M52 19 L56 25 L49 35 Q47 26 52 19 Z" fill="#5a5ae0" /><circle cx="54" cy="18" r="2" fill="#8d2020" />
    </svg>
  )
}

function Taskbar() {
  return (
    <footer className="h-[90px] shrink-0 flex items-stretch bg-[#1c1c1f] text-white">
      <button aria-label="Start" className="w-[108px] flex items-center justify-center">
        <svg className="w-8 h-8" viewBox="0 0 32 32" fill="#fff"><path d="M0 4 L13 2 V15 H0 Z M14 2 L32 0 V15 H14 Z M0 17 H13 V30 L0 28 Z M14 17 H32 V32 L14 30 Z" /></svg>
      </button>
      <label className="w-[648px] flex items-center bg-[#333335] border-2 border-[#5f5f60]">
        <svg className="ml-7 w-12 h-12 shrink-0" viewBox="0 0 48 48" fill="none" stroke="#fff" strokeWidth="3"><circle cx="32" cy="16" r="15" /><path d="M21 27 L1 47" /></svg>
        <input aria-label="Search" placeholder="Type here to search" className="ml-[30px] w-[310px] shrink-0 bg-transparent outline-none text-[32px] placeholder:text-[#d8d8d8] placeholder:opacity-100" />
        <Cassowary />
      </label>
      <nav className="flex pl-[2px]">
        {apps.map(([name, icon]) => (
          <button key={name} aria-label={name} className="relative w-[111px] flex items-center justify-center">
            <svg className="w-14 h-[54px]" viewBox="0 0 56 54">{icon}</svg>
            {name === 'Chrome' && <span className="absolute bottom-0 inset-x-[10px] h-[5px] bg-[#b4b4b4]" />}
          </button>
        ))}
        <button aria-label="Illustrator" className="relative w-[111px] flex items-center justify-center bg-[#4b4b4e]">
          <AiLogo className="w-[52px] h-[50px] rounded-lg text-[28px]" />
          <span className="absolute bottom-0 inset-x-0 h-[5px] bg-[#b4b4b4]" />
        </button>
      </nav>
      <div className="ml-auto flex items-center">
        <button className="flex items-center text-[30px] whitespace-pre">
          <svg className="mr-4 w-[58px] h-[54px]" viewBox="0 0 58 54">
            <path d="M10 40 Q8 12 26 11 Q40 11 46 26 Q56 28 56 40 Q56 50 46 50 H12 Q2 50 2 39 Q2 30 10 28 Z" fill="#a9c4f3" />
            <path d="M2 39 Q4 28 16 30 Q30 38 44 32 Q56 30 56 40 Q56 50 46 50 H12 Q2 50 2 39 Z" fill="#c8dcfb" />
            <circle cx="42" cy="14" r="13" fill="#c52b1e" /><text x="37" y="21" fontSize="19" fill="#fff">1</text>
          </svg>
          53°F  Cloudy
        </button>
        <div className="ml-11 flex">
          {tray.map(([name, icon]) => (
            <button key={name} aria-label={name} className="w-[54px] flex justify-center">
              <svg className="w-11 h-10" viewBox="-22 -20 44 40" fill="none" stroke="#fff" strokeWidth="2.5">{icon}</svg>
            </button>
          ))}
        </div>
        <button aria-label="Pen" className="ml-3 w-[50px] flex justify-center">
          <svg className="w-11 h-11" viewBox="-22 -22 44 44" fill="none" stroke="#fff" strokeWidth="2.5"><path d="M6 -16 Q12 -20 14 -12 L0 12 L-6 16 L-5 8 Z M13 -6 Q20 -4 18 2 Q12 8 6 4 M-9 -2 Q-20 4 -18 14 Q-14 22 -6 16" /></svg>
        </button>
        <div className="ml-6 w-[132px] pt-1 text-center text-[25px] leading-[42px]">
          <div>12:49 PM</div>
          <div>4/20/2024</div>
        </div>
        <button aria-label="Notifications" className="ml-10 mr-11">
          <svg className="w-9 h-9" viewBox="0 0 36 36" fill="none" stroke="#fff" strokeWidth="2.5"><path d="M2 2 H34 V29 H22 L18 34 L14 29 H2 Z" /></svg>
        </button>
        <span className="mr-[9px] w-[2px] h-[90px] bg-[#6a6a6c]" />
      </div>
    </footer>
  )
}

export default function App() {
  return (
    <div className="w-full h-screen flex flex-col overflow-hidden bg-[#535353] font-['Noto_Sans',sans-serif]">
      <Defs />
      <TitleBar />
      <OptionsBar />
      <div className="flex-1 min-h-0 flex gap-1 bg-[#4a4a4a] border-b-[3px] border-[#3a3a3a]">
        <ToolPanel />
        <DocumentWindow />
        <Dock />
      </div>
      <Taskbar />
    </div>
  )
}
